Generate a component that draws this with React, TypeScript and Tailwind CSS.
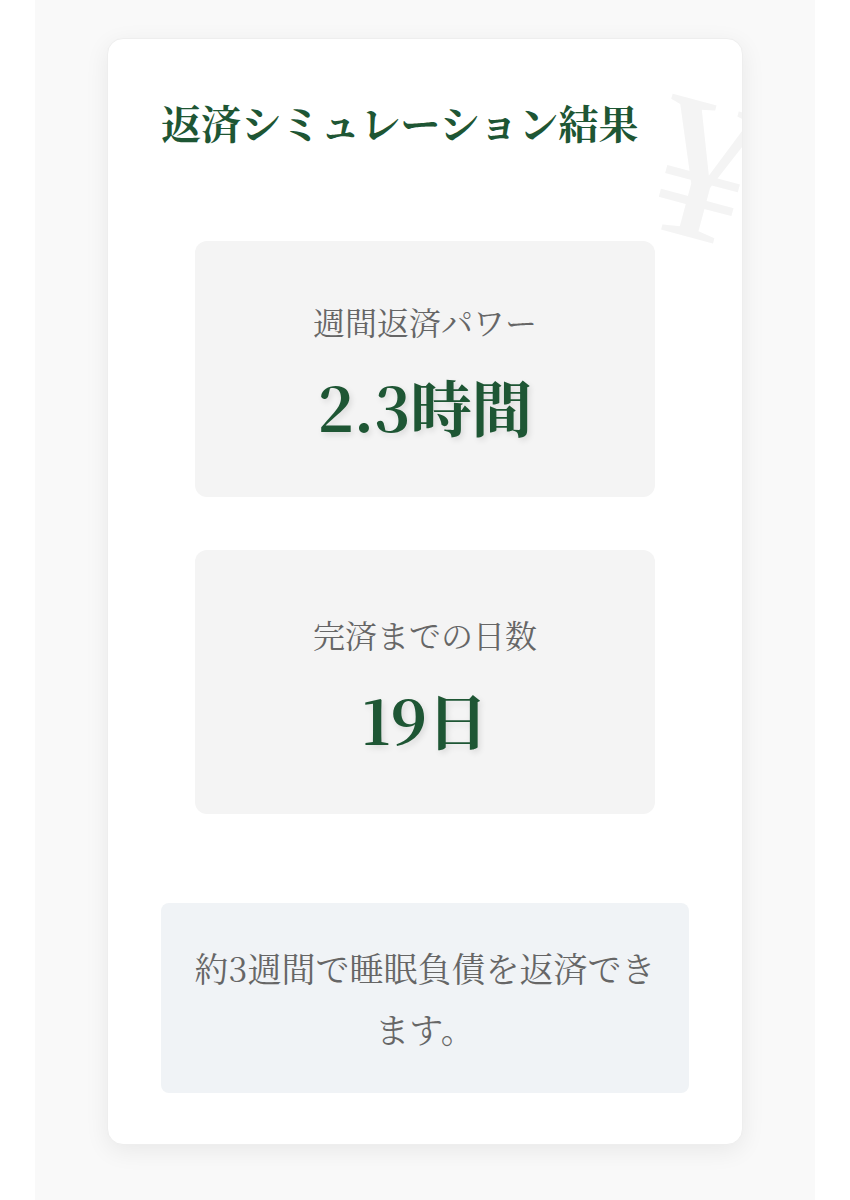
import React from "react";

const serif =
  "font-['Noto_Serif_CJK_JP','Liberation_Serif','Noto_Sans_CJK_JP',serif]";

type StatProps = { label: string; value: string; height: string };

function StatBox({ label, value, height }: StatProps) {
  return (
    <div
      className={`mx-auto flex w-[460px] flex-col items-center justify-center rounded-xl bg-[#f4f4f4] ${height}`}
    >
      <div className={`${serif} text-[32px] leading-[48px] text-[#666666]`}>
        {label}
      </div>
      <div
        className={`${serif} mt-[25px] text-[61px] font-bold leading-[72px] text-[#1e5634] [text-shadow:2px_3px_6px_rgba(0,0,0,0.11)]`}
      >
        {value}
      </div>
    </div>
  );
}

export default function App() {
  return (
    <div className="flex min-h-[1200px] justify-center bg-white">
      <div className="flex w-[780px] justify-center bg-[#f9f9f9] pt-[38px] pb-[55px]">
        <div className="relative h-[1107px] w-[636px] overflow-hidden rounded-2xl border border-[#eeeeee] bg-white px-[53px] pt-[53px] shadow-[0_6px_24px_rgba(0,0,0,0.07)]">
          {/* faint yen mark in the corner */}
          <div
            className="pointer-events-none absolute right-[-14px] top-[28px] rotate-[15deg] select-none font-['Liberation_Serif',serif] text-[205px] leading-none text-[#f4f4f4]"
            aria-hidden="true"
          >
            ¥
          </div>

          <h1
            className={`${serif} relative text-[40px] font-bold leading-[60px] text-[#1e5634]`}
          >
            返済シミュレーション結果
          </h1>

          <div className="relative mt-[89px] flex flex-col gap-[53px]">
            <StatBox label="週間返済パワー" value="2.3時間" height="h-[256px]" />
            <StatBox label="完済までの日数" value="19日" height="h-[264px]" />
          </div>

          <div className="relative mt-[89px] flex h-[190px] items-center justify-center rounded-lg bg-[#f0f3f6] px-[30px]">
            <p
              className={`${serif} text-center text-[34px] leading-[61px] text-[#666666]`}
            >
              約3週間で睡眠負債を返済できます。
            </p>
          </div>
        </div>
      </div>
    </div>
  );
}
